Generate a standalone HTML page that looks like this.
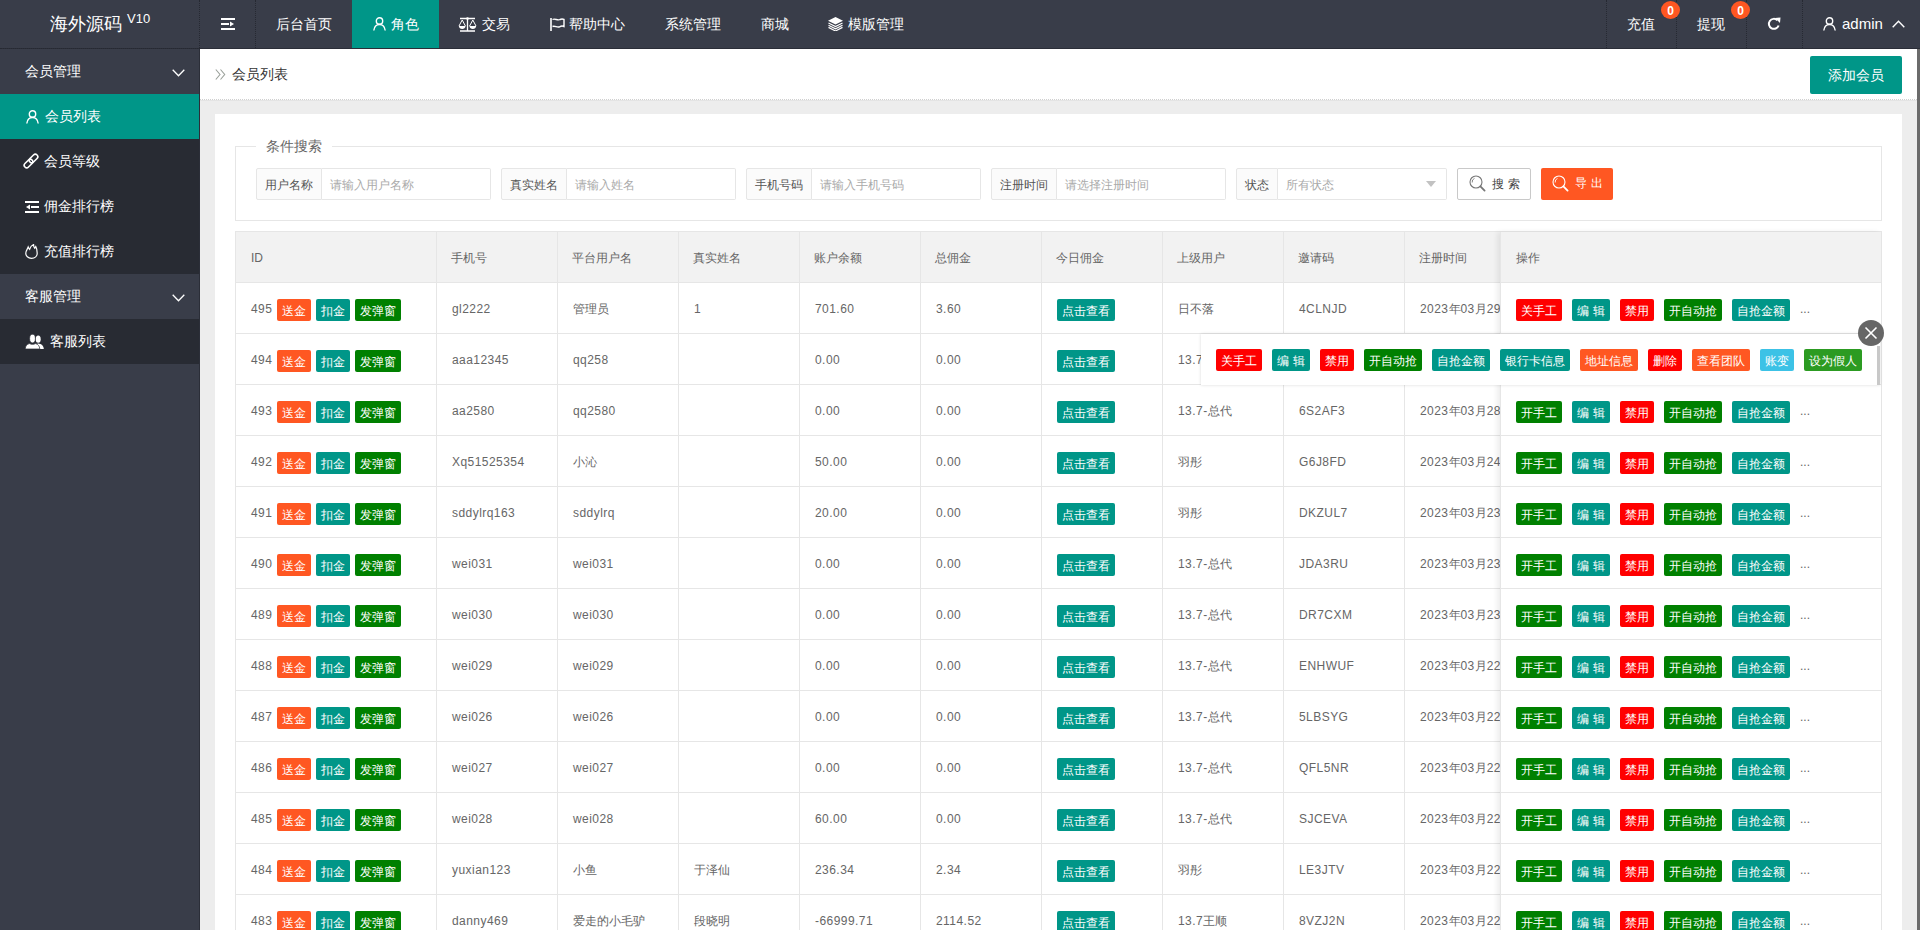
<!DOCTYPE html>
<html><head><meta charset="utf-8"><title>会员列表</title>
<style>
*{margin:0;padding:0;box-sizing:border-box}
html,body{width:1920px;height:930px;overflow:hidden;background:#EDEDED;font-family:"Liberation Sans",sans-serif;position:relative}
.a{position:absolute;line-height:0}
.a svg{display:block}
#hdr{position:absolute;left:0;top:0;width:1920px;height:49px;background:#393D49;border-bottom:1px solid #2B2E38}
#logo{position:absolute;left:50px;top:12px;color:#fff;font-size:18px;line-height:24px;white-space:nowrap}
#logo sup{font-size:13px;position:relative;top:0px;vertical-align:top;line-height:14px;margin-left:5px}
.nv{position:absolute;top:0;height:48px;line-height:48px;color:#fff;font-size:14px;white-space:nowrap}
.badge{position:absolute;top:1px;width:19px;height:18px;border-radius:50%;background:#FF5722;color:#fff;font-size:12px;line-height:20px;text-align:center;font-weight:bold}
#side{position:absolute;left:0;top:49px;width:200px;height:881px;background:#393D49;border-right:1px solid #2B2E38}
.mi{position:absolute;left:0;width:199px;height:45px;line-height:45px;color:#fff;font-size:14px;white-space:nowrap}
.mi.sub{background:#282B33}
.mi.act{background:#009688}
#crumb{position:absolute;left:200px;top:49px;width:1717px;height:51px;background:#fff;border-bottom:1px dotted #D0D0D0}
#crumb2{position:absolute;left:200px;top:100px;width:1717px;height:1px;background:#E4E4E4}
#scrl{position:absolute;left:1917px;top:49px;width:3px;height:881px;background:#6B6B6B}
#card{position:absolute;left:215px;top:114px;width:1687px;height:900px;background:#fff}
.fs{position:absolute;left:235px;top:146px;width:1647px;height:75px;border:1px solid #E6E6E6}
.legend{position:absolute;left:256px;top:137px;padding:0 10px;background:#fff;font-size:14px;line-height:18px;color:#666}
.lab{position:absolute;top:168px;height:32px;line-height:32px;border:1px solid #E6E6E6;background:#FBFBFB;color:#555;font-size:12px;padding:0 8px;border-radius:2px 0 0 2px;white-space:nowrap}
.inp{position:absolute;top:168px;height:32px;line-height:32px;border:1px solid #E6E6E6;border-left:none;background:#fff;color:#aaa;font-size:12px;padding:0 8px;border-radius:0 2px 2px 0;white-space:nowrap}
.tbl{position:absolute;left:235px;top:231px;width:1647px;height:720px;border:1px solid #E6E6E6}
.thbg{position:absolute;left:236px;top:232px;width:1645px;height:50px;background:#F2F2F2}
.th{position:absolute;top:232px;height:50px;line-height:52px;font-size:12px;color:#666;white-space:nowrap}
.vl{position:absolute;top:232px;width:1px;height:700px;background:#E6E6E6}
.hl{position:absolute;left:236px;width:1645px;height:1px;background:#E6E6E6}
.td{position:absolute;height:50px;line-height:52px;font-size:12px;color:#666;white-space:nowrap}
.b{display:inline-block;height:22px;line-height:24px;overflow:hidden;padding:0 5px;font-size:12px;color:#fff;border-radius:2px;margin-left:5px;vertical-align:top;position:relative;top:16px}
.sp{display:inline-block;width:4px}
.l{letter-spacing:0.45px}
.ops .b{margin-left:10px}
.ops .b:first-child{margin-left:0}
.o{background:#FF5722}.t{background:#009688}.g{background:#008000}.r{background:#FF0000}.lb{background:#3CC2E6}.dg{background:#2C9B22}
.dots{margin-left:10px;color:#666;font-size:12px}
#fixed{position:absolute;left:1500px;top:232px;width:381px;height:700px;background:#fff;border-left:1px solid #E6E6E6;box-shadow:-3px 0 5px rgba(0,0,0,.07)}
#tips{position:absolute;left:1201px;top:334px;width:679px;height:51px;background:#fff;box-shadow:0 0 3px rgba(0,0,0,.15)}
</style></head><body>
<div id="hdr"></div>
<div class="a" style="left:0;top:48px;width:200px;height:1px;border-top:1px dotted #262932"></div>
<div class="a" style="left:199px;top:0;height:48px;border-left:1px dotted #262932"></div>
<div class="a" style="left:255px;top:0;height:48px;border-left:1px dotted #262932"></div>
<div id="logo">海外源码<sup>V10</sup></div>
<div class="a" style="left:221px;top:18px;"><svg width="14" height="12" viewBox="0 0 14 12"><rect x="0" y="0" width="14" height="2" fill="#fff"/><rect x="0" y="5" width="8" height="2" fill="#fff"/><path d="M9 3.5 L13 6 L9 8.5Z" fill="#fff"/><rect x="0" y="10" width="14" height="2" fill="#fff"/></svg></div>
<div class="a" style="left:352px;top:0;width:87px;height:48px;background:#009688"></div>
<div class="nv" style="left:276px">后台首页</div>
<div class="nv" style="left:391px">角色</div>
<div class="nv" style="left:482px">交易</div>
<div class="nv" style="left:569px">帮助中心</div>
<div class="nv" style="left:665px">系统管理</div>
<div class="nv" style="left:761px">商城</div>
<div class="nv" style="left:848px">模版管理</div>
<div class="a" style="left:373px;top:17px;"><svg width="13" height="14" viewBox="0 0 13 14"><circle cx="6.5" cy="4" r="3.2" stroke="#fff" stroke-width="1.4" fill="none"/><path d="M0.8 13.5 C1.3 9.5 3.5 7.5 6.5 7.5 C9.5 7.5 11.7 9.5 12.2 13.5" stroke="#fff" stroke-width="1.4" fill="none"/></svg></div>
<div class="a" style="left:458px;top:17px;"><svg width="19" height="15" viewBox="0 0 19 15"><path d="M2 1.5 H17 M9.5 1 V13.5 M2 14 H17" stroke="#fff" stroke-width="1.3" fill="none"/><circle cx="9.5" cy="1.5" r="1.3" fill="#fff"/><path d="M4.2 3 L1 9 M4.2 3 L7.4 9 M14.8 3 L11.6 9 M14.8 3 L18 9" stroke="#fff" stroke-width="1" fill="none"/><path d="M0.8 9 H7.6 C7.4 11 6 12 4.2 12 C2.4 12 1 11 0.8 9Z M11.4 9 H18.2 C18 11 16.6 12 14.8 12 C13 12 11.6 11 11.4 9Z" fill="#fff"/></svg></div>
<div class="a" style="left:550px;top:18px;"><svg width="15" height="13" viewBox="0 0 15 13"><path d="M1 0 V13" stroke="#fff" stroke-width="1.6"/><path d="M2.5 1.5 C5 0 7.5 3 10 1.5 C11.5 0.8 13 1 14 1.5 V8.5 C12.5 7.8 11 8 9.5 8.8 C7 10 5 7.3 2.5 8.5" stroke="#fff" stroke-width="1.4" fill="none"/></svg></div>
<div class="a" style="left:828px;top:17px;"><svg width="15" height="14" viewBox="0 0 15 14"><path d="M7.5 0 L15 3.8 L7.5 7.6 L0 3.8Z" fill="#fff"/><path d="M0.5 6 L7.5 9.6 L14.5 6 M0.5 8.2 L7.5 11.8 L14.5 8.2 M0.5 10.4 L7.5 14 L14.5 10.4" stroke="#fff" stroke-width="1.2" fill="none"/></svg></div>
<div class="a" style="left:1606px;top:0;height:48px;border-left:1px dotted #262932"></div>
<div class="a" style="left:1676px;top:0;height:48px;border-left:1px dotted #262932"></div>
<div class="a" style="left:1746px;top:0;height:48px;border-left:1px dotted #262932"></div>
<div class="a" style="left:1802px;top:0;height:48px;border-left:1px dotted #262932"></div>
<div class="nv" style="left:1627px">充值</div>
<div class="nv" style="left:1697px">提现</div>
<div class="badge" style="left:1661px">0</div>
<div class="badge" style="left:1731px">0</div>
<div class="a" style="left:1767px;top:17px;"><svg width="14" height="14" viewBox="0 0 14 14"><path d="M11.6 8.5 A5 5 0 1 1 10.3 3.2" stroke="#fff" stroke-width="2" fill="none"/><path d="M8 1 L13.5 0.5 L13 6Z" fill="#fff"/></svg></div>
<div class="a" style="left:1823px;top:17px;"><svg width="13" height="14" viewBox="0 0 13 14"><circle cx="6.5" cy="4" r="3.2" stroke="#fff" stroke-width="1.4" fill="none"/><path d="M0.8 13.5 C1.3 9.5 3.5 7.5 6.5 7.5 C9.5 7.5 11.7 9.5 12.2 13.5" stroke="#fff" stroke-width="1.4" fill="none"/></svg></div>
<div class="nv" style="left:1842px;font-size:15px">admin</div>
<div class="a" style="left:1892px;top:20px;"><svg width="13" height="8" viewBox="0 0 13 8"><path d="M0.7 7.3 L6.5 1.2 L12.3 7.3" stroke="#fff" stroke-width="1.4" fill="none"/></svg></div>
<div id="side"></div>
<div class="mi" style="top:49px"><span style="margin-left:25px">会员管理</span></div>
<div class="a" style="left:172px;top:69px;"><svg width="13" height="8" viewBox="0 0 13 8"><path d="M0.7 0.7 L6.5 6.8 L12.3 0.7" stroke="#fff" stroke-width="1.3" fill="none"/></svg></div>
<div class="mi act" style="top:94px"><span style="position:absolute;left:45px">会员列表</span></div>
<div class="a" style="left:26px;top:110px;"><svg width="13" height="14" viewBox="0 0 13 14"><circle cx="6.5" cy="4" r="3.2" stroke="#fff" stroke-width="1.4" fill="none"/><path d="M0.8 13.5 C1.3 9.5 3.5 7.5 6.5 7.5 C9.5 7.5 11.7 9.5 12.2 13.5" stroke="#fff" stroke-width="1.4" fill="none"/></svg></div>
<div class="mi sub" style="top:139px"><span style="position:absolute;left:44px">会员等级</span></div>
<div class="a" style="left:23px;top:153px;"><svg width="16" height="16" viewBox="0 0 16 16"><g transform="rotate(-45 10.5 5.5)"><rect x="5.5" y="3" width="10" height="5" rx="2.5" stroke="#fff" stroke-width="1.6" fill="none"/></g><g transform="rotate(-45 5.5 10.5)"><rect x="0.5" y="8" width="10" height="5" rx="2.5" stroke="#fff" stroke-width="1.6" fill="none"/></g></svg></div>
<div class="mi sub" style="top:184px"><span style="position:absolute;left:44px">佣金排行榜</span></div>
<div class="a" style="left:25px;top:201px;"><svg width="14" height="12" viewBox="0 0 14 12"><rect x="0" y="0" width="14" height="2" fill="#fff"/><rect x="6" y="5" width="8" height="2" fill="#fff"/><path d="M5 3.5 L1 6 L5 8.5Z" fill="#fff"/><rect x="0" y="10" width="14" height="2" fill="#fff"/></svg></div>
<div class="mi sub" style="top:229px"><span style="position:absolute;left:44px">充值排行榜</span></div>
<div class="a" style="left:25px;top:244px;"><svg width="13" height="15" viewBox="0 0 13 15"><path d="M6.5 14.3 C3 14.3 0.8 12 0.8 9.3 C0.8 6.5 2.6 5 3.2 3 C3.8 4.5 4.2 5 4.6 5.4 C5 3.5 6.5 1.5 8.6 0.5 C8.4 2.5 9.2 3.6 9.8 4.3 C10.2 3.6 10.5 3.2 10.8 2.5 C11.8 4.2 12.2 6.5 12.2 9.3 C12.2 12 10 14.3 6.5 14.3Z" stroke="#fff" stroke-width="1.2" fill="none"/></svg></div>
<div class="mi" style="top:274px"><span style="margin-left:25px">客服管理</span></div>
<div class="a" style="left:172px;top:294px;"><svg width="13" height="8" viewBox="0 0 13 8"><path d="M0.7 0.7 L6.5 6.8 L12.3 0.7" stroke="#fff" stroke-width="1.3" fill="none"/></svg></div>
<div class="mi sub" style="top:319px"><span style="position:absolute;left:50px">客服列表</span></div>
<div class="a" style="left:25px;top:334px;"><svg width="19" height="15" viewBox="0 0 19 15"><ellipse cx="13.2" cy="5.2" rx="2.5" ry="3.6" fill="#fff"/><path d="M9 15 C9.3 11.5 11 9.6 13.2 9.4 C16 9.6 18.6 11.2 18.8 15Z" fill="#fff"/><ellipse cx="7.5" cy="4.6" rx="2.9" ry="4.3" fill="#fff" stroke="#282B33" stroke-width="0.7"/><path d="M0.2 15 C0.4 12 2 10 4.6 9.6 C5.8 10.6 9.2 10.6 10.4 9.6 C13 10 14.6 12 14.8 15Z" fill="#fff" stroke="#282B33" stroke-width="0.7"/></svg></div>
<div id="crumb"></div><div id="crumb2"></div>
<div class="a" style="left:215px;top:69px;"><svg width="11" height="11" viewBox="0 0 11 11"><path d="M0.8 0.5 L5 5.5 L0.8 10.5 M5.5 0.5 L9.7 5.5 L5.5 10.5" stroke="#9aa09a" stroke-width="1.1" fill="none"/></svg></div>
<div class="a" style="left:232px;top:49px;height:50px;line-height:50px;font-size:14px;color:#333">会员列表</div>
<div class="a" style="left:1810px;top:56px;width:92px;height:38px;line-height:38px;background:#009688;color:#fff;font-size:14px;text-align:center;border-radius:2px">添加会员</div>
<div id="scrl"></div>
<div id="card"></div>
<div class="fs"></div>
<div class="legend">条件搜索</div>
<div class="lab" style="left:256px;width:66px">用户名称</div><div class="inp" style="left:322px;width:169px">请输入用户名称</div>
<div class="lab" style="left:501px;width:66px">真实姓名</div><div class="inp" style="left:567px;width:169px">请输入姓名</div>
<div class="lab" style="left:746px;width:66px">手机号码</div><div class="inp" style="left:812px;width:169px">请输入手机号码</div>
<div class="lab" style="left:991px;width:66px">注册时间</div><div class="inp" style="left:1057px;width:169px">请选择注册时间</div>
<div class="lab" style="left:1236px;width:42px">状态</div><div class="inp" style="left:1278px;width:169px">所有状态</div>
<div class="a" style="left:1426px;top:181px;width:0;height:0;border-left:5px solid transparent;border-right:5px solid transparent;border-top:6px solid #c2c2c2"></div>
<div class="a" style="left:1457px;top:168px;width:74px;height:32px;border:1px solid #C9C9C9;background:#fff;border-radius:2px"></div>
<div class="a" style="left:1469px;top:175px;"><svg width="17" height="17" viewBox="0 0 17 17"><circle cx="7" cy="7" r="6" stroke="#777" stroke-width="1.1" fill="none"/><path d="M3.2 7.5 A3.8 3.8 0 0 1 5.5 3.4" stroke="#777" stroke-width="0.9" fill="none"/><path d="M11.4 11.4 L15.6 15.6" stroke="#777" stroke-width="1.8" stroke-linecap="round"/></svg></div>
<div class="a" style="left:1492px;top:168px;height:32px;line-height:32px;font-size:12px;color:#444;letter-spacing:4px">搜索</div>
<div class="a" style="left:1541px;top:168px;width:72px;height:32px;background:#FF5722;border-radius:2px"></div>
<div class="a" style="left:1552px;top:175px;"><svg width="17" height="17" viewBox="0 0 17 17"><circle cx="7" cy="7" r="6" stroke="#fff" stroke-width="1.1" fill="none"/><path d="M3.2 7.5 A3.8 3.8 0 0 1 5.5 3.4" stroke="#fff" stroke-width="0.9" fill="none"/><path d="M11.4 11.4 L15.6 15.6" stroke="#fff" stroke-width="1.8" stroke-linecap="round"/></svg></div>
<div class="a" style="left:1575px;top:167px;height:32px;line-height:32px;font-size:12px;color:#fff;letter-spacing:4px">导出</div>
<div class="tbl"></div>
<div class="thbg"></div>
<div class="th" style="left:251px">ID</div>
<div class="th" style="left:451px">手机号</div>
<div class="th" style="left:572px">平台用户名</div>
<div class="th" style="left:693px">真实姓名</div>
<div class="th" style="left:814px">账户余额</div>
<div class="th" style="left:935px">总佣金</div>
<div class="th" style="left:1056px">今日佣金</div>
<div class="th" style="left:1177px">上级用户</div>
<div class="th" style="left:1298px">邀请码</div>
<div class="th" style="left:1419px">注册时间</div>
<div class="vl" style="left:436px"></div>
<div class="vl" style="left:557px"></div>
<div class="vl" style="left:678px"></div>
<div class="vl" style="left:799px"></div>
<div class="vl" style="left:920px"></div>
<div class="vl" style="left:1041px"></div>
<div class="vl" style="left:1162px"></div>
<div class="vl" style="left:1283px"></div>
<div class="vl" style="left:1404px"></div>
<div class="hl" style="top:282px"></div>
<div class="hl" style="top:333px"></div>
<div class="hl" style="top:384px"></div>
<div class="hl" style="top:435px"></div>
<div class="hl" style="top:486px"></div>
<div class="hl" style="top:537px"></div>
<div class="hl" style="top:588px"></div>
<div class="hl" style="top:639px"></div>
<div class="hl" style="top:690px"></div>
<div class="hl" style="top:741px"></div>
<div class="hl" style="top:792px"></div>
<div class="hl" style="top:843px"></div>
<div class="hl" style="top:894px"></div>
<div class="hl" style="top:945px"></div>
<div class="td" style="left:251px;top:283px"><span class="l">495</span></div><div class="td" style="left:277px;top:283px"><span class="b o" style="margin-left:0">送金</span><span class="b t">扣金</span><span class="b g">发弹窗</span></div>
<div class="td" style="left:452px;top:283px"><span class="l">gl2222</span></div>
<div class="td" style="left:573px;top:283px">管理员</div>
<div class="td" style="left:694px;top:283px"><span class="l">1</span></div>
<div class="td" style="left:815px;top:283px"><span class="l">701.60</span></div>
<div class="td" style="left:936px;top:283px"><span class="l">3.60</span></div>
<div class="td" style="left:1057px;top:283px"><span class="b t" style="margin:0">点击查看</span></div>
<div class="td" style="left:1178px;top:283px">日不落</div>
<div class="td" style="left:1299px;top:283px"><span class="l">4CLNJD</span></div>
<div class="td" style="left:1420px;top:283px"><span class="l">2023</span>年<span class="l">03</span>月<span class="l">29</span></div>
<div class="td" style="left:251px;top:334px"><span class="l">494</span></div><div class="td" style="left:277px;top:334px"><span class="b o" style="margin-left:0">送金</span><span class="b t">扣金</span><span class="b g">发弹窗</span></div>
<div class="td" style="left:452px;top:334px"><span class="l">aaa12345</span></div>
<div class="td" style="left:573px;top:334px"><span class="l">qq258</span></div>
<div class="td" style="left:815px;top:334px"><span class="l">0.00</span></div>
<div class="td" style="left:936px;top:334px"><span class="l">0.00</span></div>
<div class="td" style="left:1057px;top:334px"><span class="b t" style="margin:0">点击查看</span></div>
<div class="td" style="left:1178px;top:334px"><span class="l">13.7-</span>总代</div>
<div class="td" style="left:1299px;top:334px"><span class="l">6S2AF3</span></div>
<div class="td" style="left:1420px;top:334px"><span class="l">2023</span>年<span class="l">03</span>月<span class="l">28</span></div>
<div class="td" style="left:251px;top:385px"><span class="l">493</span></div><div class="td" style="left:277px;top:385px"><span class="b o" style="margin-left:0">送金</span><span class="b t">扣金</span><span class="b g">发弹窗</span></div>
<div class="td" style="left:452px;top:385px"><span class="l">aa2580</span></div>
<div class="td" style="left:573px;top:385px"><span class="l">qq2580</span></div>
<div class="td" style="left:815px;top:385px"><span class="l">0.00</span></div>
<div class="td" style="left:936px;top:385px"><span class="l">0.00</span></div>
<div class="td" style="left:1057px;top:385px"><span class="b t" style="margin:0">点击查看</span></div>
<div class="td" style="left:1178px;top:385px"><span class="l">13.7-</span>总代</div>
<div class="td" style="left:1299px;top:385px"><span class="l">6S2AF3</span></div>
<div class="td" style="left:1420px;top:385px"><span class="l">2023</span>年<span class="l">03</span>月<span class="l">28</span></div>
<div class="td" style="left:251px;top:436px"><span class="l">492</span></div><div class="td" style="left:277px;top:436px"><span class="b o" style="margin-left:0">送金</span><span class="b t">扣金</span><span class="b g">发弹窗</span></div>
<div class="td" style="left:452px;top:436px"><span class="l">Xq51525354</span></div>
<div class="td" style="left:573px;top:436px">小沁</div>
<div class="td" style="left:815px;top:436px"><span class="l">50.00</span></div>
<div class="td" style="left:936px;top:436px"><span class="l">0.00</span></div>
<div class="td" style="left:1057px;top:436px"><span class="b t" style="margin:0">点击查看</span></div>
<div class="td" style="left:1178px;top:436px">羽彤</div>
<div class="td" style="left:1299px;top:436px"><span class="l">G6J8FD</span></div>
<div class="td" style="left:1420px;top:436px"><span class="l">2023</span>年<span class="l">03</span>月<span class="l">24</span></div>
<div class="td" style="left:251px;top:487px"><span class="l">491</span></div><div class="td" style="left:277px;top:487px"><span class="b o" style="margin-left:0">送金</span><span class="b t">扣金</span><span class="b g">发弹窗</span></div>
<div class="td" style="left:452px;top:487px"><span class="l">sddylrq163</span></div>
<div class="td" style="left:573px;top:487px"><span class="l">sddylrq</span></div>
<div class="td" style="left:815px;top:487px"><span class="l">20.00</span></div>
<div class="td" style="left:936px;top:487px"><span class="l">0.00</span></div>
<div class="td" style="left:1057px;top:487px"><span class="b t" style="margin:0">点击查看</span></div>
<div class="td" style="left:1178px;top:487px">羽彤</div>
<div class="td" style="left:1299px;top:487px"><span class="l">DKZUL7</span></div>
<div class="td" style="left:1420px;top:487px"><span class="l">2023</span>年<span class="l">03</span>月<span class="l">23</span></div>
<div class="td" style="left:251px;top:538px"><span class="l">490</span></div><div class="td" style="left:277px;top:538px"><span class="b o" style="margin-left:0">送金</span><span class="b t">扣金</span><span class="b g">发弹窗</span></div>
<div class="td" style="left:452px;top:538px"><span class="l">wei031</span></div>
<div class="td" style="left:573px;top:538px"><span class="l">wei031</span></div>
<div class="td" style="left:815px;top:538px"><span class="l">0.00</span></div>
<div class="td" style="left:936px;top:538px"><span class="l">0.00</span></div>
<div class="td" style="left:1057px;top:538px"><span class="b t" style="margin:0">点击查看</span></div>
<div class="td" style="left:1178px;top:538px"><span class="l">13.7-</span>总代</div>
<div class="td" style="left:1299px;top:538px"><span class="l">JDA3RU</span></div>
<div class="td" style="left:1420px;top:538px"><span class="l">2023</span>年<span class="l">03</span>月<span class="l">23</span></div>
<div class="td" style="left:251px;top:589px"><span class="l">489</span></div><div class="td" style="left:277px;top:589px"><span class="b o" style="margin-left:0">送金</span><span class="b t">扣金</span><span class="b g">发弹窗</span></div>
<div class="td" style="left:452px;top:589px"><span class="l">wei030</span></div>
<div class="td" style="left:573px;top:589px"><span class="l">wei030</span></div>
<div class="td" style="left:815px;top:589px"><span class="l">0.00</span></div>
<div class="td" style="left:936px;top:589px"><span class="l">0.00</span></div>
<div class="td" style="left:1057px;top:589px"><span class="b t" style="margin:0">点击查看</span></div>
<div class="td" style="left:1178px;top:589px"><span class="l">13.7-</span>总代</div>
<div class="td" style="left:1299px;top:589px"><span class="l">DR7CXM</span></div>
<div class="td" style="left:1420px;top:589px"><span class="l">2023</span>年<span class="l">03</span>月<span class="l">23</span></div>
<div class="td" style="left:251px;top:640px"><span class="l">488</span></div><div class="td" style="left:277px;top:640px"><span class="b o" style="margin-left:0">送金</span><span class="b t">扣金</span><span class="b g">发弹窗</span></div>
<div class="td" style="left:452px;top:640px"><span class="l">wei029</span></div>
<div class="td" style="left:573px;top:640px"><span class="l">wei029</span></div>
<div class="td" style="left:815px;top:640px"><span class="l">0.00</span></div>
<div class="td" style="left:936px;top:640px"><span class="l">0.00</span></div>
<div class="td" style="left:1057px;top:640px"><span class="b t" style="margin:0">点击查看</span></div>
<div class="td" style="left:1178px;top:640px"><span class="l">13.7-</span>总代</div>
<div class="td" style="left:1299px;top:640px"><span class="l">ENHWUF</span></div>
<div class="td" style="left:1420px;top:640px"><span class="l">2023</span>年<span class="l">03</span>月<span class="l">22</span></div>
<div class="td" style="left:251px;top:691px"><span class="l">487</span></div><div class="td" style="left:277px;top:691px"><span class="b o" style="margin-left:0">送金</span><span class="b t">扣金</span><span class="b g">发弹窗</span></div>
<div class="td" style="left:452px;top:691px"><span class="l">wei026</span></div>
<div class="td" style="left:573px;top:691px"><span class="l">wei026</span></div>
<div class="td" style="left:815px;top:691px"><span class="l">0.00</span></div>
<div class="td" style="left:936px;top:691px"><span class="l">0.00</span></div>
<div class="td" style="left:1057px;top:691px"><span class="b t" style="margin:0">点击查看</span></div>
<div class="td" style="left:1178px;top:691px"><span class="l">13.7-</span>总代</div>
<div class="td" style="left:1299px;top:691px"><span class="l">5LBSYG</span></div>
<div class="td" style="left:1420px;top:691px"><span class="l">2023</span>年<span class="l">03</span>月<span class="l">22</span></div>
<div class="td" style="left:251px;top:742px"><span class="l">486</span></div><div class="td" style="left:277px;top:742px"><span class="b o" style="margin-left:0">送金</span><span class="b t">扣金</span><span class="b g">发弹窗</span></div>
<div class="td" style="left:452px;top:742px"><span class="l">wei027</span></div>
<div class="td" style="left:573px;top:742px"><span class="l">wei027</span></div>
<div class="td" style="left:815px;top:742px"><span class="l">0.00</span></div>
<div class="td" style="left:936px;top:742px"><span class="l">0.00</span></div>
<div class="td" style="left:1057px;top:742px"><span class="b t" style="margin:0">点击查看</span></div>
<div class="td" style="left:1178px;top:742px"><span class="l">13.7-</span>总代</div>
<div class="td" style="left:1299px;top:742px"><span class="l">QFL5NR</span></div>
<div class="td" style="left:1420px;top:742px"><span class="l">2023</span>年<span class="l">03</span>月<span class="l">22</span></div>
<div class="td" style="left:251px;top:793px"><span class="l">485</span></div><div class="td" style="left:277px;top:793px"><span class="b o" style="margin-left:0">送金</span><span class="b t">扣金</span><span class="b g">发弹窗</span></div>
<div class="td" style="left:452px;top:793px"><span class="l">wei028</span></div>
<div class="td" style="left:573px;top:793px"><span class="l">wei028</span></div>
<div class="td" style="left:815px;top:793px"><span class="l">60.00</span></div>
<div class="td" style="left:936px;top:793px"><span class="l">0.00</span></div>
<div class="td" style="left:1057px;top:793px"><span class="b t" style="margin:0">点击查看</span></div>
<div class="td" style="left:1178px;top:793px"><span class="l">13.7-</span>总代</div>
<div class="td" style="left:1299px;top:793px"><span class="l">SJCEVA</span></div>
<div class="td" style="left:1420px;top:793px"><span class="l">2023</span>年<span class="l">03</span>月<span class="l">22</span></div>
<div class="td" style="left:251px;top:844px"><span class="l">484</span></div><div class="td" style="left:277px;top:844px"><span class="b o" style="margin-left:0">送金</span><span class="b t">扣金</span><span class="b g">发弹窗</span></div>
<div class="td" style="left:452px;top:844px"><span class="l">yuxian123</span></div>
<div class="td" style="left:573px;top:844px">小鱼</div>
<div class="td" style="left:694px;top:844px">于泽仙</div>
<div class="td" style="left:815px;top:844px"><span class="l">236.34</span></div>
<div class="td" style="left:936px;top:844px"><span class="l">2.34</span></div>
<div class="td" style="left:1057px;top:844px"><span class="b t" style="margin:0">点击查看</span></div>
<div class="td" style="left:1178px;top:844px">羽彤</div>
<div class="td" style="left:1299px;top:844px"><span class="l">LE3JTV</span></div>
<div class="td" style="left:1420px;top:844px"><span class="l">2023</span>年<span class="l">03</span>月<span class="l">22</span></div>
<div class="td" style="left:251px;top:895px"><span class="l">483</span></div><div class="td" style="left:277px;top:895px"><span class="b o" style="margin-left:0">送金</span><span class="b t">扣金</span><span class="b g">发弹窗</span></div>
<div class="td" style="left:452px;top:895px"><span class="l">danny469</span></div>
<div class="td" style="left:573px;top:895px">爱走的小毛驴</div>
<div class="td" style="left:694px;top:895px">段晓明</div>
<div class="td" style="left:815px;top:895px"><span class="l">-66999.71</span></div>
<div class="td" style="left:936px;top:895px"><span class="l">2114.52</span></div>
<div class="td" style="left:1057px;top:895px"><span class="b t" style="margin:0">点击查看</span></div>
<div class="td" style="left:1178px;top:895px"><span class="l">13.7</span>王顺</div>
<div class="td" style="left:1299px;top:895px"><span class="l">8VZJ2N</span></div>
<div class="td" style="left:1420px;top:895px"><span class="l">2023</span>年<span class="l">03</span>月<span class="l">22</span></div>
<div id="fixed"></div>
<div class="a" style="left:1501px;top:232px;width:380px;height:50px;background:#F2F2F2"></div>
<div class="th" style="left:1516px">操作</div>
<div class="a" style="left:1500px;width:381px;height:1px;background:#E6E6E6;top:282px"></div>
<div class="a" style="left:1500px;width:381px;height:1px;background:#E6E6E6;top:333px"></div>
<div class="a" style="left:1500px;width:381px;height:1px;background:#E6E6E6;top:384px"></div>
<div class="a" style="left:1500px;width:381px;height:1px;background:#E6E6E6;top:435px"></div>
<div class="a" style="left:1500px;width:381px;height:1px;background:#E6E6E6;top:486px"></div>
<div class="a" style="left:1500px;width:381px;height:1px;background:#E6E6E6;top:537px"></div>
<div class="a" style="left:1500px;width:381px;height:1px;background:#E6E6E6;top:588px"></div>
<div class="a" style="left:1500px;width:381px;height:1px;background:#E6E6E6;top:639px"></div>
<div class="a" style="left:1500px;width:381px;height:1px;background:#E6E6E6;top:690px"></div>
<div class="a" style="left:1500px;width:381px;height:1px;background:#E6E6E6;top:741px"></div>
<div class="a" style="left:1500px;width:381px;height:1px;background:#E6E6E6;top:792px"></div>
<div class="a" style="left:1500px;width:381px;height:1px;background:#E6E6E6;top:843px"></div>
<div class="a" style="left:1500px;width:381px;height:1px;background:#E6E6E6;top:894px"></div>
<div class="a" style="left:1500px;width:381px;height:1px;background:#E6E6E6;top:945px"></div>
<div class="td ops" style="left:1516px;top:283px"><span class="b r">关手工</span><span class="b t">编<i class="sp"></i>辑</span><span class="b r">禁用</span><span class="b g">开自动抢</span><span class="b t">自抢金额</span><span class="dots">...</span></div>
<div class="td ops" style="left:1516px;top:334px"><span class="b r">关手工</span><span class="b t">编<i class="sp"></i>辑</span><span class="b r">禁用</span><span class="b g">开自动抢</span><span class="b t">自抢金额</span><span class="dots">...</span></div>
<div class="td ops" style="left:1516px;top:385px"><span class="b g">开手工</span><span class="b t">编<i class="sp"></i>辑</span><span class="b r">禁用</span><span class="b g">开自动抢</span><span class="b t">自抢金额</span><span class="dots">...</span></div>
<div class="td ops" style="left:1516px;top:436px"><span class="b g">开手工</span><span class="b t">编<i class="sp"></i>辑</span><span class="b r">禁用</span><span class="b g">开自动抢</span><span class="b t">自抢金额</span><span class="dots">...</span></div>
<div class="td ops" style="left:1516px;top:487px"><span class="b g">开手工</span><span class="b t">编<i class="sp"></i>辑</span><span class="b r">禁用</span><span class="b g">开自动抢</span><span class="b t">自抢金额</span><span class="dots">...</span></div>
<div class="td ops" style="left:1516px;top:538px"><span class="b g">开手工</span><span class="b t">编<i class="sp"></i>辑</span><span class="b r">禁用</span><span class="b g">开自动抢</span><span class="b t">自抢金额</span><span class="dots">...</span></div>
<div class="td ops" style="left:1516px;top:589px"><span class="b g">开手工</span><span class="b t">编<i class="sp"></i>辑</span><span class="b r">禁用</span><span class="b g">开自动抢</span><span class="b t">自抢金额</span><span class="dots">...</span></div>
<div class="td ops" style="left:1516px;top:640px"><span class="b g">开手工</span><span class="b t">编<i class="sp"></i>辑</span><span class="b r">禁用</span><span class="b g">开自动抢</span><span class="b t">自抢金额</span><span class="dots">...</span></div>
<div class="td ops" style="left:1516px;top:691px"><span class="b g">开手工</span><span class="b t">编<i class="sp"></i>辑</span><span class="b r">禁用</span><span class="b g">开自动抢</span><span class="b t">自抢金额</span><span class="dots">...</span></div>
<div class="td ops" style="left:1516px;top:742px"><span class="b g">开手工</span><span class="b t">编<i class="sp"></i>辑</span><span class="b r">禁用</span><span class="b g">开自动抢</span><span class="b t">自抢金额</span><span class="dots">...</span></div>
<div class="td ops" style="left:1516px;top:793px"><span class="b g">开手工</span><span class="b t">编<i class="sp"></i>辑</span><span class="b r">禁用</span><span class="b g">开自动抢</span><span class="b t">自抢金额</span><span class="dots">...</span></div>
<div class="td ops" style="left:1516px;top:844px"><span class="b g">开手工</span><span class="b t">编<i class="sp"></i>辑</span><span class="b r">禁用</span><span class="b g">开自动抢</span><span class="b t">自抢金额</span><span class="dots">...</span></div>
<div class="td ops" style="left:1516px;top:895px"><span class="b g">开手工</span><span class="b t">编<i class="sp"></i>辑</span><span class="b r">禁用</span><span class="b g">开自动抢</span><span class="b t">自抢金额</span><span class="dots">...</span></div>
<div id="tips"></div>
<div class="td ops" style="left:1216px;top:333px"><span class="b r">关手工</span><span class="b t">编<i class="sp"></i>辑</span><span class="b r">禁用</span><span class="b g">开自动抢</span><span class="b t">自抢金额</span><span class="b t">银行卡信息</span><span class="b o">地址信息</span><span class="b r">删除</span><span class="b o">查看团队</span><span class="b lb">账变</span><span class="b dg">设为假人</span></div>
<div class="a" style="left:1877px;top:346px;width:3px;height:39px;background:#c8c8c8"></div>
<div class="a" style="left:1858px;top:320px;"><svg width="26" height="26" viewBox="0 0 26 26"><circle cx="13" cy="13" r="13" fill="#666"/><path d="M7.5 7.5 L18.5 18.5 M18.5 7.5 L7.5 18.5" stroke="#fff" stroke-width="1.6"/></svg></div>
</body></html>
